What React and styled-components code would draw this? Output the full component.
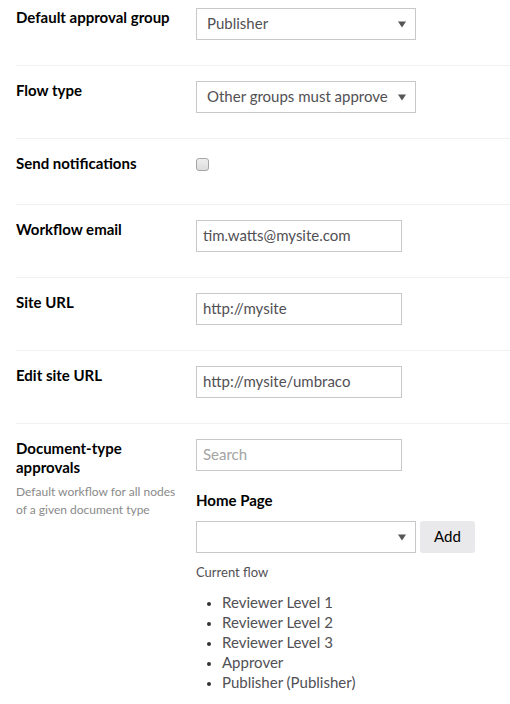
import React from "react";
import styled, { createGlobalStyle } from "styled-components";

const Global = createGlobalStyle`
  html, body { margin: 0; padding: 0; background: #fff; }
  body { font-family: Lato, "Open Sans", sans-serif; color: #000; }
`;

const Page = styled.div`
  padding-left: 16px;
  width: 494px;
`;

const Row = styled.div`
  display: grid;
  grid-template-columns: 180px 1fr;
  padding: ${(p) => (p.$first ? "8px" : "15px")} 0 25px;
  border-bottom: ${(p) => (p.$last ? "none" : "1px solid #f1f1f2")};
`;

const LabelCol = styled.div`
  padding-right: 14px;
`;

const Label = styled.div`
  font-size: 15px;
  font-weight: 700;
  line-height: 19px;
  color: #000;
`;

const Description = styled.div`
  margin-top: 6px;
  font-size: 12px;
  line-height: 18px;
  color: #8a8a8a;
`;

const ControlCol = styled.div`
  display: flex;
  flex-direction: column;
  align-items: flex-start;
  min-height: 25px;
`;

const SelectBox = styled.div`
  box-sizing: border-box;
  width: 220px;
  height: 32px;
  border: 1px solid #c8c8c8;
  background: #fff;
  display: flex;
  align-items: center;
  justify-content: space-between;
  padding: 0 9px 3px 10px;
  font-size: 15px;
  color: #515054;
  white-space: nowrap;
  overflow: hidden;
`;

const SelectText = styled.span`
  overflow: hidden;
  flex: 1;
`;

const Arrow = styled.svg`
  flex: none;
  margin: 3px 0 0 8px;
`;

const TextInput = styled.div`
  box-sizing: border-box;
  width: 206px;
  height: 32px;
  border: 1px solid #c8c8c8;
  display: flex;
  align-items: center;
  padding: 0 6px 3px;
  font-size: 15px;
  color: ${(p) => (p.$placeholder ? "#a3a3a3" : "#515054")};
`;

const Checkbox = styled.span`
  display: block;
  box-sizing: border-box;
  width: 13px;
  height: 13px;
  margin-top: 4px;
  border: 1px solid #a6a6a6;
  border-radius: 3px;
  background: linear-gradient(#eeeeee, #dcdcdc);
`;

const SubHeading = styled.div`
  margin-top: 19px;
  font-size: 15px;
  font-weight: 700;
  line-height: 20px;
  color: #000;
`;

const InlineGroup = styled.div`
  display: flex;
  gap: 4px;
  margin-top: 11px;
`;

const Button = styled.button`
  box-sizing: border-box;
  height: 32px;
  width: 55px;
  border: none;
  border-radius: 3px;
  background: #e9e9eb;
  font-family: Lato, sans-serif;
  font-size: 15px;
  color: #000;
  padding: 0 0 3px;
`;

const SmallText = styled.div`
  margin-top: 9px;
  font-size: 13px;
  line-height: 20px;
  color: #515054;
`;

const FlowList = styled.ul`
  margin: 10px 0 0;
  padding-left: 26px;
  font-size: 15px;
  line-height: 20px;
  color: #515054;
  li::marker { color: #333; font-size: 12px; }
`;

const DownArrow = () => (
  <Arrow width="8" height="8" viewBox="0 0 8 8">
    <path d="M0 1.5 H8 L4 7.5 Z" fill="#555" />
  </Arrow>
);

const Select = ({ value }) => (
  <SelectBox>
    <SelectText>{value}</SelectText>
    <DownArrow />
  </SelectBox>
);

export default function App() {
  return (
    <>
      <Global />
      <Page>
        <Row $first>
          <LabelCol><Label>Default approval group</Label></LabelCol>
          <ControlCol><Select value="Publisher" /></ControlCol>
        </Row>
        <Row>
          <LabelCol><Label>Flow type</Label></LabelCol>
          <ControlCol><Select value="Other groups must approve" /></ControlCol>
        </Row>
        <Row>
          <LabelCol><Label>Send notifications</Label></LabelCol>
          <ControlCol><Checkbox /></ControlCol>
        </Row>
        <Row>
          <LabelCol><Label>Workflow email</Label></LabelCol>
          <ControlCol><TextInput>tim.watts@mysite.com</TextInput></ControlCol>
        </Row>
        <Row>
          <LabelCol><Label>Site URL</Label></LabelCol>
          <ControlCol><TextInput>http://mysite</TextInput></ControlCol>
        </Row>
        <Row>
          <LabelCol><Label>Edit site URL</Label></LabelCol>
          <ControlCol><TextInput>http://mysite/umbraco</TextInput></ControlCol>
        </Row>
        <Row $last>
          <LabelCol>
            <Label>Document-type approvals</Label>
            <Description>Default workflow for all nodes of a given document type</Description>
          </LabelCol>
          <ControlCol>
            <TextInput $placeholder>Search</TextInput>
            <SubHeading>Home Page</SubHeading>
            <InlineGroup>
              <Select value="" />
              <Button>Add</Button>
            </InlineGroup>
            <SmallText>Current flow</SmallText>
            <FlowList>
              <li>Reviewer Level 1</li>
              <li>Reviewer Level 2</li>
              <li>Reviewer Level 3</li>
              <li>Approver</li>
              <li>Publisher (Publisher)</li>
            </FlowList>
          </ControlCol>
        </Row>
      </Page>
    </>
  );
}
